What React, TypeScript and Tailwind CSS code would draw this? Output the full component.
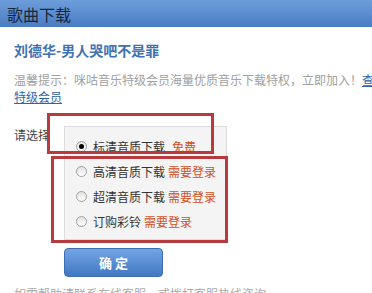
import React from 'react';

const options = [
  { label: '标清音质下载', note: '免费', checked: true },
  { label: '高清音质下载', note: '需要登录', checked: false },
  { label: '超清音质下载', note: '需要登录', checked: false },
  { label: '订购彩铃', note: '需要登录', checked: false },
];

const Radio: React.FC<{ checked: boolean }> = ({ checked }) => (
  <span className="w-[11px] h-[11px] rounded-full border border-[#a0a0a0] bg-gradient-to-b from-[#e2e2e2] to-white flex items-center justify-center shrink-0">
    {checked && <span className="w-[5px] h-[5px] rounded-full bg-black" />}
  </span>
);

const App: React.FC = () => {
  return (
    <div
      className="relative w-[372px] h-[293px] overflow-hidden bg-white"
      style={{ fontFamily: '"Noto Sans CJK SC", "Liberation Sans", sans-serif' }}
    >
      {/* header */}
      <div className="h-[27px] bg-gradient-to-b from-[#6d9dda] to-[#4a7cc4] flex items-center pl-[7px]">
        <span className="text-[16px] leading-none text-[#1a263a]">歌曲下载</span>
      </div>

      <div className="pl-[14px] w-[420px]">
        <h2 className="mt-[13px] text-[14px] leading-[20px] font-bold text-[#4072b2]">刘德华-男人哭吧不是罪</h2>

        <p className="mt-[11px] text-[12px] leading-[17px] text-[#a0a0a0]">
          温馨提示：咪咕音乐特级会员海量优质音乐下载特权，立即加入！
          <span className="text-[#2f64a8] underline">查看</span>
          <br />
          <span className="text-[#2f64a8] underline">特级会员</span>
        </p>

        <div className="mt-[21px] flex items-start">
          <span className="w-[50px] text-[12px] leading-[18px] text-[#444]">请选择</span>
          <div className="w-[163px] h-[114px] bg-[#f4f4f4] border border-[#dcdcdc] pt-[7px] pl-[11px]">
            {options.map((o) => (
              <div key={o.label} className="h-[25px] flex items-center text-[12px]">
                <Radio checked={o.checked} />
                <span className="ml-[6px] text-[#333]">{o.label}</span>
                <span className={`${o.checked ? 'ml-[7px]' : 'ml-[3px]'} text-[#d2501e]`}>{o.note}</span>
              </div>
            ))}
          </div>
        </div>

        <button className="mt-[8px] ml-[50px] w-[99px] h-[29px] rounded-[4px] border border-[#3d6eb3] bg-gradient-to-b from-[#73a5e4] to-[#4178c2] text-white text-[13px] font-semibold">
          确 定
        </button>

        <p className="mt-[8px] text-[12px] leading-[17px] text-[#aaa]">
          如需帮助请联系在线客服，或拨打客服热线咨询。
        </p>
      </div>

      {/* annotation boxes */}
      <div className="absolute left-[47px] top-[113px] w-[167px] h-[41px] border-[3px] border-[#b83a3c]" />
      <div className="absolute left-[51px] top-[156px] w-[177px] h-[87px] border-[3px] border-[#b83a3c]" />
    </div>
  );
};

export default App;
